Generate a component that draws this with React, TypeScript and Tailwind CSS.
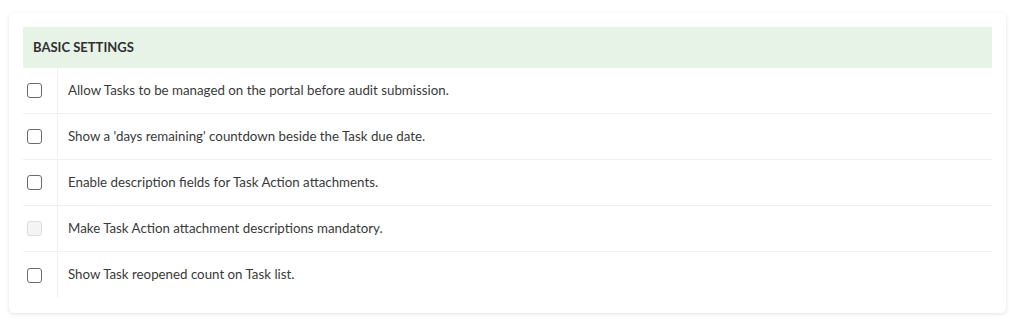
import React from "react";

const settings = [
  { label: "Allow Tasks to be managed on the portal before audit submission.", disabled: false },
  { label: "Show a 'days remaining' countdown beside the Task due date.", disabled: false },
  { label: "Enable description fields for Task Action attachments.", disabled: false },
  { label: "Make Task Action attachment descriptions mandatory.", disabled: true },
  { label: "Show Task reopened count on Task list.", disabled: false },
];

const Checkbox = ({ disabled }: { disabled: boolean }) => (
  <span
    className={
      disabled
        ? "block w-[15px] h-[15px] rounded-[3px] border border-[#dcdcdc] bg-[#f4f4f4]"
        : "block w-[15px] h-[15px] rounded-[3px] border-[1.5px] border-[#6b6b6b] bg-white"
    }
  />
);

const App = () => {
  return (
    <div className="w-[1024px] h-[333px] bg-white pt-[13px] pl-[9px] font-['Lato','Liberation_Sans',sans-serif]">
      <div className="w-[997px] h-[300px] bg-white rounded-[5px] shadow-[0_1px_4px_rgba(0,0,0,0.12)] p-[14px]">
        <div className="h-[41px] bg-[#e8f3e8] flex items-center pl-[10px] text-[13px] font-bold text-[#2f2f2f]">
          BASIC SETTINGS
        </div>
        <div>
          {settings.map((s, i) => (
            <div
              key={i}
              className={
                i < settings.length - 1
                  ? "flex h-[46px] border-b border-[#f0f0f0]"
                  : "flex h-[46px]"
              }
            >
              <div className="w-[35px] flex items-center pl-[4px] border-r border-[#f0f0f0]">
                <Checkbox disabled={s.disabled} />
              </div>
              <div className="flex items-center pl-[10px] text-[13.3px] text-[#3a3a3a]">{s.label}</div>
            </div>
          ))}
        </div>
      </div>
    </div>
  );
};

export default App;
